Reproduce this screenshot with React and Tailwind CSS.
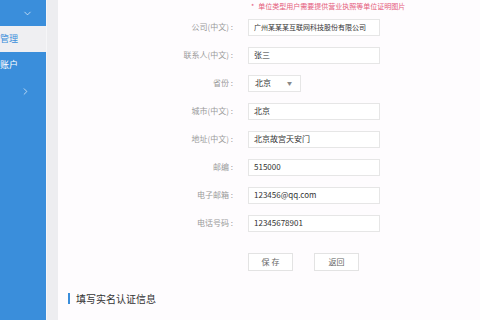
import { ChevronDown, ChevronRight } from 'lucide-react';

const font = { fontFamily: '"Noto Sans CJK SC", "Noto Sans", sans-serif' };

const rows = [
  { label: '公司(中文)', value: '广州某某某互联网科技股份有限公司', small: true },
  { label: '联系人(中文)', value: '张三' },
  { label: '省份', value: '北京', select: true },
  { label: '城市(中文)', value: '北京' },
  { label: '地址(中文)', value: '北京故宫天安门' },
  { label: '邮编', value: '515000' },
  { label: '电子邮箱', value: '123456@qq.com' },
  { label: '电话号码', value: '12345678901' },
];

function Sidebar() {
  return (
    <div className="flex shrink-0">
      <div className="w-[46px] flex flex-col bg-[#3a8edb] text-white">
        <div className="h-[26px] flex items-center justify-end pr-[13px]">
          <ChevronDown className="w-[11px] h-[11px] text-white/70" strokeWidth={2} />
        </div>
        <div className="h-[26px] flex items-center bg-[#efeff2] text-[9px] text-[#3a8edb]">管理</div>
        <div className="h-[26px] flex items-center text-[9px] text-white">账户</div>
        <div className="h-[26px] flex items-center justify-end pr-[15px]">
          <ChevronRight className="w-[11px] h-[11px] text-white/70" strokeWidth={2} />
        </div>
      </div>
      <div className="w-[12px] bg-[#ededf0] border-l border-[#f6f6f8]" />
    </div>
  );
}

export default function App() {
  return (
    <div className="flex w-[480px] h-[320px] overflow-hidden bg-[#fefcfe]" style={font}>
      <Sidebar />
      <div className="flex-1 pl-[10px]">
        <div className="h-[12px] leading-[12px] pl-[183px] text-[7px] text-[#e45b7c] whitespace-nowrap">
          <span className="mr-[4px]">*</span>单位类型用户需要提供营业执照等单位证明图片
        </div>
        <div className="flex flex-col pt-[1px]">
          {rows.map(r => (
            <div key={r.label} className="h-[28px] flex items-center">
              <div className="w-[165px] text-right text-[8px] text-[#9a9a9a] whitespace-nowrap">{r.label} :</div>
              <div className="ml-[15px]">
                {r.select ? (
                  <div className="w-[53px] h-[17px] bg-white border border-[#e6e6e6] flex items-center justify-between pl-[6px] pr-[8px] text-[8px] text-[#333]">
                    <span>{r.value}</span>
                    <span className="text-[5px] text-[#888]">▼</span>
                  </div>
                ) : (
                  <div className={`w-[132px] h-[17px] bg-white border border-[#e6e6e6] flex items-center pl-[5px] text-[#333] whitespace-nowrap overflow-hidden ${r.small ? 'text-[7px]' : 'text-[8px]'}`}>
                    {r.value}
                  </div>
                )}
              </div>
            </div>
          ))}
        </div>
        <div className="flex gap-[21px] pl-[180px] mt-[16px]">
          <button className="w-[45px] h-[18px] border border-[#e3e3e3] bg-white text-[8px] text-[#666]">保 存</button>
          <button className="w-[45px] h-[18px] border border-[#e3e3e3] bg-white text-[8px] text-[#666]">返回</button>
        </div>
        <div className="mt-[21px] flex items-center gap-[6px] h-[13px]">
          <div className="w-[2px] h-[11px] bg-[#3a8edb]" />
          <span className="text-[10px] text-[#333]">填写实名认证信息</span>
        </div>
      </div>
    </div>
  );
}
